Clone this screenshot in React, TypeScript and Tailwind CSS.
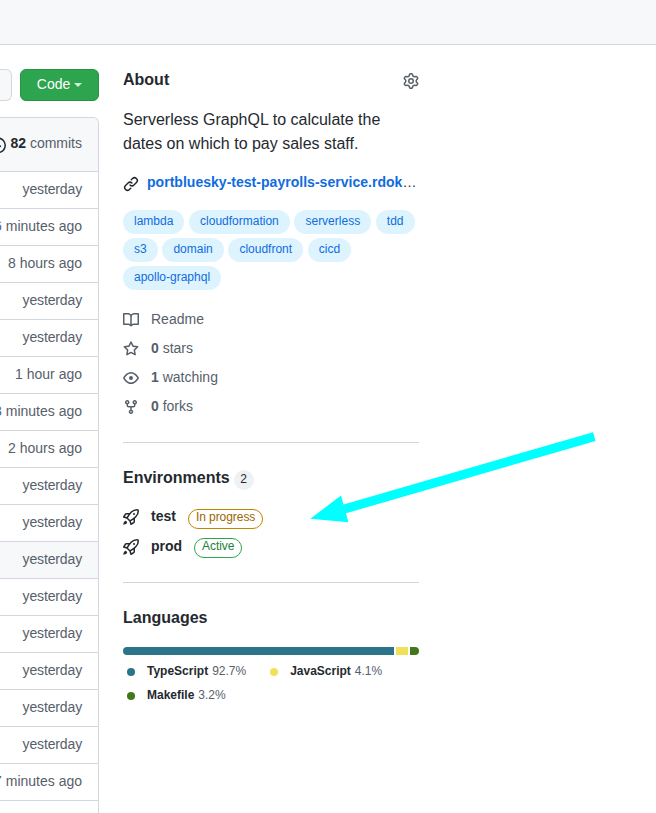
import React from "react";

const paths = {
  gear: "M7.429 1.525a6.593 6.593 0 011.142 0c.036.003.108.036.137.146l.289 1.105c.147.56.55.967.997 1.189.174.086.341.183.501.29.417.278.97.423 1.53.27l1.102-.303c.11-.03.175.016.195.046.219.31.41.641.573.989.014.031.022.11-.059.19l-.815.806c-.411.406-.562.957-.53 1.456a4.588 4.588 0 010 .582c-.032.499.119 1.05.53 1.456l.815.806c.08.08.073.159.059.19a6.494 6.494 0 01-.573.99c-.02.029-.086.074-.195.045l-1.103-.303c-.559-.153-1.112-.008-1.529.27-.16.107-.327.204-.5.29-.449.222-.851.628-.998 1.189l-.289 1.105c-.029.11-.101.143-.137.146a6.613 6.613 0 01-1.142 0c-.036-.003-.108-.037-.137-.146l-.289-1.105c-.147-.56-.55-.967-.997-1.189a4.502 4.502 0 01-.501-.29c-.417-.278-.97-.423-1.53-.27l-1.102.303c-.11.03-.175-.016-.195-.046a6.492 6.492 0 01-.573-.989c-.014-.031-.022-.11.059-.19l.815-.806c.411-.406.562-.957.53-1.456a4.587 4.587 0 010-.582c.032-.499-.119-1.05-.53-1.456l-.815-.806c-.08-.08-.073-.159-.059-.19a6.44 6.44 0 01.573-.99c.02-.029.086-.075.195-.045l1.103.303c.559.153 1.112.008 1.529-.27.16-.107.327-.204.5-.29.449-.222.851-.628.998-1.189l.289-1.105c.029-.11.101-.143.137-.146zM8 0c-.236 0-.47.01-.701.03-.743.065-1.29.615-1.458 1.261l-.29 1.106c-.017.066-.078.158-.211.224a5.994 5.994 0 00-.668.386c-.123.082-.233.09-.3.071L3.27 2.776c-.644-.177-1.392.02-1.82.63a7.977 7.977 0 00-.704 1.217c-.315.675-.111 1.422.363 1.891l.815.806c.05.048.098.147.088.294a6.084 6.084 0 000 .772c.01.147-.038.246-.088.294l-.815.806c-.474.469-.678 1.216-.363 1.891.2.428.436.835.704 1.218.428.609 1.176.806 1.82.63l1.103-.303c.066-.019.176-.011.299.071.213.143.436.272.668.386.133.066.194.158.212.224l.289 1.106c.169.646.715 1.196 1.458 1.26a8.094 8.094 0 001.402 0c.743-.064 1.29-.614 1.458-1.26l.29-1.106c.017-.066.078-.158.211-.224a5.98 5.98 0 00.668-.386c.123-.082.233-.09.3-.071l1.102.302c.644.177 1.392-.02 1.82-.63.268-.382.505-.789.704-1.217.315-.675.111-1.422-.364-1.891l-.814-.806c-.05-.048-.098-.147-.088-.294a6.1 6.1 0 000-.772c-.01-.147.039-.246.088-.294l.814-.806c.475-.469.679-1.216.364-1.891a7.992 7.992 0 00-.704-1.218c-.428-.609-1.176-.806-1.82-.63l-1.103.303c-.066.019-.176.011-.299-.071a5.991 5.991 0 00-.668-.386c-.133-.066-.194-.158-.212-.224L10.16 1.29C9.99.645 9.444.095 8.701.031A8.094 8.094 0 008 0zm1.5 8a1.5 1.5 0 11-3 0 1.5 1.5 0 013 0zM11 8a3 3 0 11-6 0 3 3 0 016 0z",
  link: "M7.775 3.275a.75.75 0 001.06 1.06l1.25-1.25a2 2 0 112.83 2.83l-2.5 2.5a2 2 0 01-2.83 0 .75.75 0 00-1.06 1.06 3.5 3.5 0 004.95 0l2.5-2.5a3.5 3.5 0 00-4.95-4.95l-1.25 1.25zm-4.69 9.64a2 2 0 010-2.83l2.5-2.5a2 2 0 012.83 0 .75.75 0 001.06-1.06 3.5 3.5 0 00-4.95 0l-2.5 2.5a3.5 3.5 0 004.95 4.95l1.25-1.25a.75.75 0 00-1.06-1.06l-1.25 1.25a2 2 0 01-2.83 0z",
  book: "M0 1.75A.75.75 0 01.75 1h4.253c1.227 0 2.317.59 3 1.501A3.744 3.744 0 0111.006 1h4.245a.75.75 0 01.75.75v10.5a.75.75 0 01-.75.75h-4.507a2.25 2.25 0 00-1.591.659l-.622.621a.75.75 0 01-1.06 0l-.622-.621A2.25 2.25 0 005.258 13H.75a.75.75 0 01-.75-.75V1.75zm8.755 3a2.25 2.25 0 012.25-2.25H14.5v9h-3.757c-.71 0-1.4.201-1.992.572l.004-7.322zm-1.504 7.324l.004-5.073-.002-2.253A2.25 2.25 0 005.003 2.5H1.5v9h3.757a3.75 3.75 0 011.994.574z",
  star: "M8 .25a.75.75 0 01.673.418l1.882 3.815 4.21.612a.75.75 0 01.416 1.279l-3.046 2.97.719 4.192a.75.75 0 01-1.088.791L8 12.347l-3.766 1.98a.75.75 0 01-1.088-.79l.72-4.194L.818 6.374a.75.75 0 01.416-1.28l4.21-.611L7.327.668A.75.75 0 018 .25zm0 2.445L6.615 5.5a.75.75 0 01-.564.41l-3.097.45 2.24 2.184a.75.75 0 01.216.664l-.528 3.084 2.769-1.456a.75.75 0 01.698 0l2.77 1.456-.53-3.084a.75.75 0 01.216-.664l2.24-2.183-3.096-.45a.75.75 0 01-.564-.41L8 2.694v.001z",
  eye: "M1.679 7.932c.412-.621 1.242-1.75 2.366-2.717C5.175 4.242 6.527 3.5 8 3.5c1.473 0 2.824.742 3.955 1.715 1.124.967 1.954 2.096 2.366 2.717a.119.119 0 010 .136c-.412.621-1.242 1.75-2.366 2.717C10.825 11.758 9.473 12.5 8 12.5c-1.473 0-2.824-.742-3.955-1.715C2.92 9.818 2.09 8.69 1.679 8.068a.119.119 0 010-.136zM8 2c-1.981 0-3.67.992-4.933 2.078C1.797 5.169.88 6.423.43 7.1a1.619 1.619 0 000 1.798c.45.678 1.367 1.932 2.637 3.024C4.329 13.008 6.019 14 8 14c1.981 0 3.67-.992 4.933-2.078 1.27-1.091 2.187-2.345 2.637-3.023a1.619 1.619 0 000-1.798c-.45-.678-1.367-1.932-2.637-3.023C11.671 2.992 9.981 2 8 2zm0 8a2 2 0 100-4 2 2 0 000 4z",
  fork: "M5 3.25a.75.75 0 11-1.5 0 .75.75 0 011.5 0zm0 2.122a2.25 2.25 0 10-1.5 0v.878A2.25 2.25 0 005.75 8.5h1.5v2.128a2.251 2.251 0 101.5 0V8.5h1.5a2.25 2.25 0 002.25-2.25v-.878a2.25 2.25 0 10-1.5 0v.878a.75.75 0 01-.75.75h-4.5A.75.75 0 015 6.25v-.878zm3.75 7.378a.75.75 0 11-1.5 0 .75.75 0 011.5 0zm3-8.75a.75.75 0 100-1.5.75.75 0 000 1.5z",
  rocket: "M14.064 0a8.75 8.75 0 00-6.187 2.563l-.459.458c-.314.314-.616.641-.904.979H3.31a1.75 1.75 0 00-1.49.833L.11 7.607a.75.75 0 00.418 1.11l3.102.954c.037.051.079.1.124.145l2.429 2.428c.046.046.094.088.145.125l.954 3.102a.75.75 0 001.11.418l2.774-1.707a1.75 1.75 0 00.833-1.49V9.485c.338-.288.665-.59.979-.904l.458-.459A8.75 8.75 0 0016 1.936V1.75A1.75 1.75 0 0014.25 0h-.186zM10.5 10.625c-.088.06-.177.118-.266.175l-2.35 1.521.548 1.783 1.949-1.2a.25.25 0 00.119-.213v-2.066zM3.678 8.116L5.2 5.766c.058-.09.117-.178.176-.266H3.309a.25.25 0 00-.213.119l-1.2 1.95 1.782.547zm5.26-4.493A7.25 7.25 0 0114.063 1.5h.186a.25.25 0 01.25.25v.186a7.25 7.25 0 01-2.123 5.127l-.459.458a15.21 15.21 0 01-2.499 2.02l-2.317 1.5-2.143-2.143 1.5-2.317a15.25 15.25 0 012.02-2.5l.458-.458h.002zM12 5a1 1 0 11-2 0 1 1 0 012 0zm-8.44 9.56a1.5 1.5 0 10-2.12-2.12c-.734.73-1.047 2.332-1.15 3.003a.23.23 0 00.265.265c.671-.103 2.273-.416 3.005-1.148z",
};

function Icon({ name, className = "" }: { name: keyof typeof paths; className?: string }) {
  return (
    <svg viewBox="0 0 16 16" className={`size-4 shrink-0 ${className}`} fill="currentColor" fillRule="evenodd">
      <path d={paths[name]} />
    </svg>
  );
}

const times = [
  "yesterday", "6 minutes ago", "8 hours ago", "yesterday", "yesterday", "1 hour ago",
  "3 minutes ago", "2 hours ago", "yesterday", "yesterday", "yesterday", "yesterday",
  "yesterday", "yesterday", "yesterday", "yesterday", "7 minutes ago", "yesterday",
];

const topics = ["lambda", "cloudformation", "serverless", "tdd", "s3", "domain", "cloudfront", "cicd", "apollo-graphql"];

const stats: { icon: keyof typeof paths; count?: string; label: string }[] = [
  { icon: "book", label: "Readme" },
  { icon: "star", count: "0", label: "stars" },
  { icon: "eye", count: "1", label: "watching" },
  { icon: "fork", count: "0", label: "forks" },
];

function Files() {
  return (
    <div className="flex w-[99px] shrink-0 flex-col pt-6">
      <div className="flex h-8 justify-between">
        <div className="w-3 rounded-r-md border border-l-0 border-[#d5d8da] bg-[#f6f8fa]" />
        <button className="flex w-[79px] items-center justify-center rounded-md border border-[#2a9147] bg-[#2da44e] pb-0.5 text-sm font-medium text-white">
          Code
          <span className="mt-[2px] ml-1 border-x-4 border-t-4 border-x-transparent border-t-white/80" />
        </button>
      </div>
      <div className="mt-4 flex h-[740px] flex-col overflow-hidden rounded-tr-md border-t border-r border-[#d0d7de] text-sm text-[#57606a]">
        <div className="flex h-[53px] shrink-0 items-center justify-end bg-[#f6f8fa] pr-4 whitespace-nowrap">
          <svg viewBox="0 0 16 16" className="mr-1 size-4 shrink-0 text-[#24292f]" fill="none" stroke="currentColor" strokeWidth="1.5">
            <path d="M1.5 5.2A7.2 7.2 0 1 1 .8 8M8 4.2v4l3 1.3" />
          </svg>
          <span className="pb-[3px]"><b className="text-[#24292f]">82</b> commits</span>
        </div>
        {times.map((time, i) => (
          <div key={i} className={`flex h-[37px] shrink-0 items-center justify-end border-t border-[#d0d7de] pr-4 whitespace-nowrap ${i === 17 ? "pb-px" : "pb-[3px]"} ${i === 10 ? "bg-[#f6f8fa]" : ""} ${time === "yesterday" ? "tracking-[-0.14px]" : ""}`}>
            {time}
          </div>
        ))}
      </div>
    </div>
  );
}

function Environment({ name, status, tone, label }: { name: string; status: string; tone: string; label: string }) {
  return (
    <div className="flex items-start">
      <div className={`flex items-start ${label}`}>
        <Icon name="rocket" />
        <b className="ml-3 text-sm leading-[14px]">{name}</b>
      </div>
      <span className={`ml-3 h-5 rounded-full border px-[7px] text-xs leading-[14px] tracking-[-0.06px] ${tone}`}>{status}</span>
    </div>
  );
}

function Language({ color, name, share }: { color: string; name: string; share: string }) {
  return (
    <div className="flex h-6 items-center text-xs">
      <span className={`mt-px mr-3 ml-1 size-2 rounded-full ${color}`} />
      <b className="mr-1">{name}</b>
      <span className="text-[#57606a]">{share}</span>
    </div>
  );
}

function Sidebar() {
  return (
    <aside className="w-[296px] shrink-0 pt-6">
      <section className="h-[374px] border-b border-[#d0d7de]">
        <div className="flex h-6 justify-between">
          <h2 className="text-base leading-[22px] font-bold">About</h2>
          <Icon name="gear" className="mt-1 text-[#57606a]" />
        </div>
        <p className="mt-[15px] text-base leading-6">Serverless GraphQL to calculate the dates on which to pay sales staff.</p>
        <div className="mt-[15px] flex h-6 items-start">
          <Icon name="link" className="mt-[5px]" />
          <div className="ml-2 w-[271px] truncate text-sm leading-[22px]">
            <a className="font-bold tracking-[0.025px] text-[#0f6ce0]">portbluesky-test-payrolls-service.rdokos.com</a>
          </div>
        </div>
        <div className="mt-[15px] flex flex-wrap gap-x-[4.7px] gap-y-1">
          {topics.map((topic) => (
            <span key={topic} className="h-6 rounded-full bg-[#ddf4ff] px-[11px] text-xs leading-[22px] text-[#0f6ce0]">{topic}</span>
          ))}
        </div>
        <div className="mt-[18px] flex flex-col gap-[8px] text-sm text-[#57606a]">
          {stats.map(({ icon, count, label }) => (
            <div key={label} className="flex h-[21px] items-start gap-3">
              <Icon name={icon} className="mt-1" />
              <span className="leading-[23px]">{count && <b>{count} </b>}{label}</span>
            </div>
          ))}
        </div>
      </section>
      <section className="h-[140px] border-b border-[#d0d7de] pt-6">
        <div className="flex h-[42px] items-start">
          <h2 className="text-base leading-[22px] font-bold">Environments</h2>
          <span className="mt-[3px] ml-1 flex size-5 items-center justify-center rounded-full bg-[#eff1f3] pb-[2px] text-xs">2</span>
        </div>
        <div className="flex flex-col gap-[9px]">
          <Environment name="test" status="In progress" tone="border-[#bf8700] text-[#9a6700]" label="pt-0" />
          <Environment name="prod" status="Active" tone="border-[#2da44e] text-[#1a7f37]" label="pt-px" />
        </div>
      </section>
      <section className="pt-6">
        <h2 className="text-base leading-[22px] font-bold">Languages</h2>
        <div className="mt-[18px] mb-1 flex h-2 gap-[2px] overflow-hidden rounded-md">
          <span className="grow bg-[#2b7489]" />
          <span className="w-3 bg-[#f1e05a]" />
          <span className="w-[9px] bg-[#427819]" />
        </div>
        <div className="flex flex-wrap gap-x-5">
          <Language color="bg-[#2b7489]" name="TypeScript" share="92.7%" />
          <Language color="bg-[#f1e05a]" name="JavaScript" share="4.1%" />
          <Language color="bg-[#427819]" name="Makefile" share="3.2%" />
        </div>
      </section>
    </aside>
  );
}

export default function App() {
  return (
    <div className="relative h-[813px] w-[656px] overflow-hidden bg-white font-['Liberation_Sans',sans-serif] text-[#24292f]">
      <header className="h-[45px] border-b border-[#d0d7de] bg-[#f6f8fa]" />
      <main className="flex gap-6">
        <Files />
        <Sidebar />
      </main>
      <svg viewBox="0 0 290 95" className="absolute top-[430px] left-[308px] h-[95px] w-[290px]" fill="#00ffff">
        <path d="M2.3 88.8L33 65.5L35.5 74.5L285 2.2L287.6 11L38 83.3L40.3 92.3Z" />
      </svg>
    </div>
  );
}
